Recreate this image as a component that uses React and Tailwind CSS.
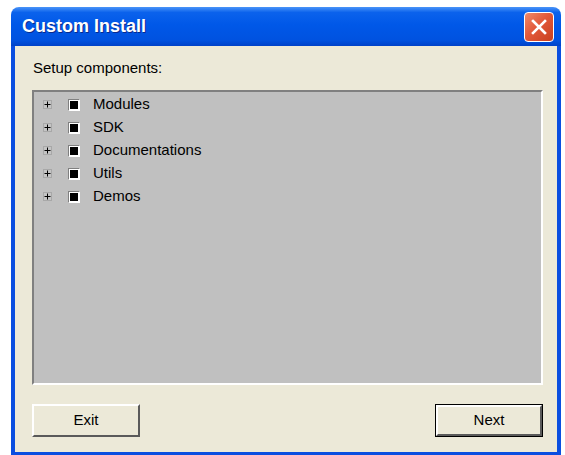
import { useState } from 'react';

const components = ['Modules', 'SDK', 'Documentations', 'Utils', 'Demos'];

// Classic sunken checkbox with a filled (partial) state
const TriCheck = () => (
  <span className="w-[12px] h-[12px] border border-t-[#808080] border-l-[#808080] border-b-white border-r-white bg-white flex items-center justify-center">
    <span className="w-[8px] h-[8px] bg-black" />
  </span>
);

const Expander = () => (
  <span className="w-[9px] h-[9px] border border-[#a8a8a8] bg-[#c4c4c4] flex items-center justify-center">
    <svg width="7" height="7" viewBox="0 0 7 7">
      <path d="M0.5 3.5h6M3.5 0.5v6" stroke="#000" strokeWidth="1" />
    </svg>
  </span>
);

const XPButton = ({ children, isDefault }) => (
  <button
    className={
      'w-[108px] h-[33px] bg-[#ece9d8] text-[15px] text-black ' +
      (isDefault ? 'border border-black p-0' : 'p-0')
    }
  >
    <span className="w-full h-full flex items-center justify-center border-2 border-t-white border-l-white border-b-[#5a5a5a] border-r-[#5a5a5a]">
      {children}
    </span>
  </button>
);

export default function App() {
  const [items] = useState(components);

  return (
    <div
      className="w-[565px] h-[455px] bg-white pt-[7px] pl-[11px] pr-[4px]"
      style={{ fontFamily: '"Liberation Sans", Arial, sans-serif' }}
    >
      <div className="w-[550px] h-[448px] flex flex-col rounded-t-[8px] overflow-hidden">
        {/* Title bar */}
        <div className="h-[39px] shrink-0 flex items-center justify-between pl-[11px] pr-[7px] bg-[linear-gradient(to_bottom,#4a94f8_0%,#0b62ec_14%,#0058e8_45%,#0052e0_85%,#0042c8_100%)]">
          <span className="text-white font-bold text-[18px] [text-shadow:1px_1px_0_#0a2a8c]">
            Custom Install
          </span>
          <span className="w-[30px] h-[30px] rounded-[4px] border border-white bg-[linear-gradient(135deg,#f08a6a_0%,#e2593a_45%,#c8401f_100%)] flex items-center justify-center">
            <svg width="18" height="18" viewBox="0 0 18 18">
              <path d="M3 3L15 15M15 3L3 15" stroke="#fff" strokeWidth="2.6" strokeLinecap="square" />
            </svg>
          </span>
        </div>

        {/* Dialog body */}
        <div className="flex-1 flex flex-col bg-[#ece9d8] border-x-4 border-b-[3px] border-[#0a4ee0] pt-[13px] pl-[17px] pr-[14px] pb-[12px]">
          <p className="text-[15px] text-black leading-[17px] ml-[1px]">Setup components:</p>

          <div className="mt-[14px] h-[295px] bg-[#c0c0c0] border-2 border-t-[#808080] border-l-[#808080] border-b-white border-r-white pt-[1px]">
            {items.map((name) => (
              <div key={name} className="h-[23px] flex items-center pl-[9px]">
                <Expander />
                <span className="ml-[16px]">
                  <TriCheck />
                </span>
                <span className="ml-[13px] text-[15px] text-black">{name}</span>
              </div>
            ))}
          </div>

          <div className="mt-[19px] flex justify-between">
            <XPButton>Exit</XPButton>
            <XPButton isDefault>Next</XPButton>
          </div>
        </div>
      </div>
    </div>
  );
}
